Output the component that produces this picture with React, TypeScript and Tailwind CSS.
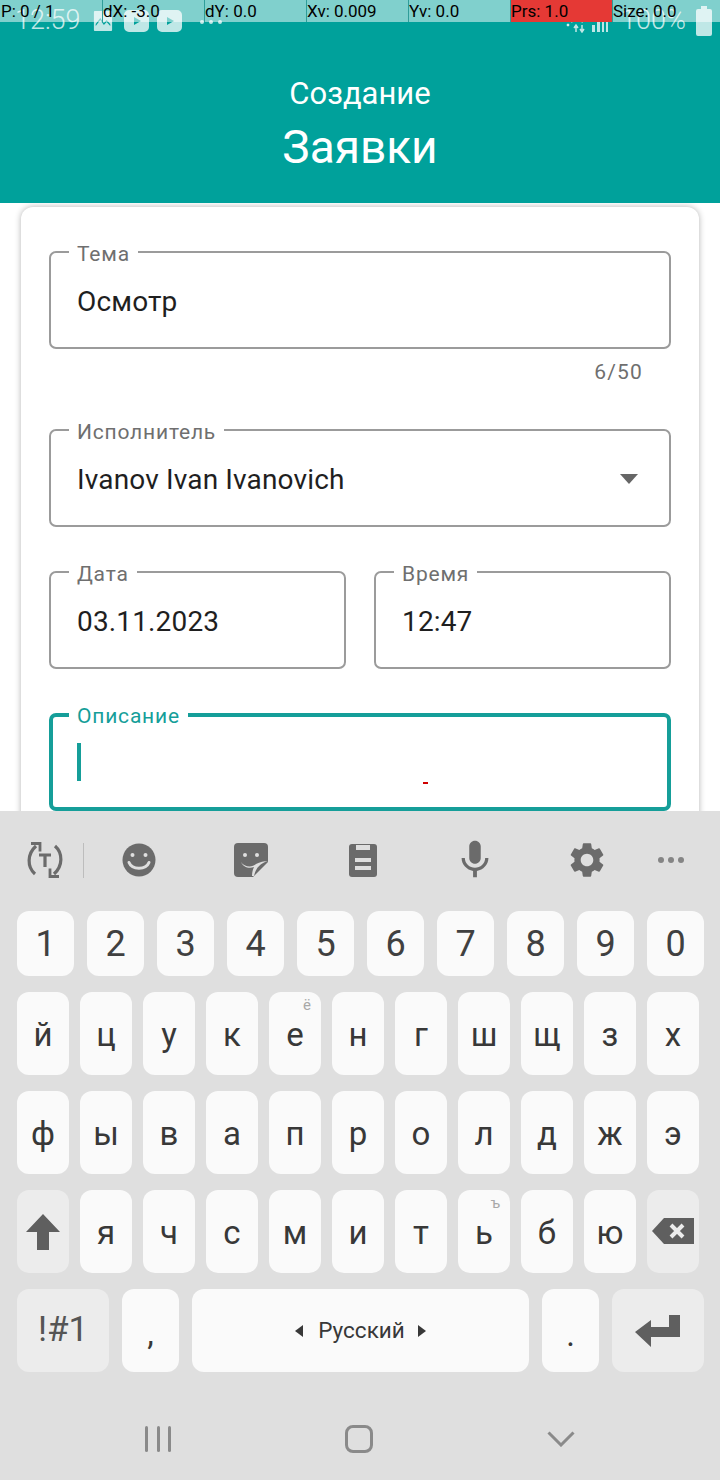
import { ReactNode } from 'react';
import { MdMic, MdSettings } from 'react-icons/md';

const pointerCells = ['P: 0 / 1', 'dX: -3.0', 'dY: 0.0', 'Xv: 0.009', 'Yv: 0.0', 'Prs: 1.0', 'Size: 0.0'];
const digits = ['1', '2', '3', '4', '5', '6', '7', '8', '9', '0'];
const row1 = ['й', 'ц', 'у', 'к', 'е', 'н', 'г', 'ш', 'щ', 'з', 'х'];
const row2 = ['ф', 'ы', 'в', 'а', 'п', 'р', 'о', 'л', 'д', 'ж', 'э'];
const row3 = ['я', 'ч', 'с', 'м', 'и', 'т', 'ь', 'б', 'ю'];

function Field({ label, width, children, focused }: { label: string; width?: string; children?: ReactNode; focused?: boolean }) {
  return (
    <div className={`relative h-[98px] rounded-[7px] flex items-center ${width ?? 'w-full'} ${focused ? 'border-4 border-[#159e99] pl-[24px]' : 'border-2 border-[#9b9b9b] pl-[26px]'}`}>
      <span className={`absolute bg-white px-[8px] text-[21px] leading-[22px] tracking-[0.8px] ${focused ? '-top-[12px] left-[16px] text-[#159e99]' : '-top-[10px] left-[18px] text-[#6f6f6f]'}`}>{label}</span>
      {children}
    </div>
  );
}

function Value({ children }: { children: ReactNode }) {
  return <span className="pt-[4px] text-[28px] leading-[32px] tracking-[0.15px] text-[#1f1f1f]">{children}</span>;
}

function LetterKey({ ch, sup }: { ch: string; sup?: string }) {
  return (
    <div className="relative w-[52px] h-[83px] rounded-[12px] bg-[#fafafa] flex items-center justify-center pt-[2px] text-[33px] text-[#383838]">
      {ch}
      {sup && <span className="absolute top-[3px] right-[10px] text-[15px] leading-[20px] text-[#a8a8a8]">{sup}</span>}
    </div>
  );
}

function StatusBar() {
  return (
    <div className="h-[40px] flex items-center pl-[15px] pr-[8px] text-white/75">
      <span className="text-[27px] leading-[40px] font-light">12:59</span>
      <svg width="20" height="22" viewBox="0 0 22 22" className="ml-[12px] mt-[2px]" fill="currentColor" preserveAspectRatio="none">
        <path d="M2 1h18a1 1 0 0 1 1 1v18a1 1 0 0 1-1 1H2a1 1 0 0 1-1-1V2a1 1 0 0 1 1-1Zm1 15 5-6 4 5 3-3 4 4v-2l-4-4-3 3-4-5-5 6Z" fillRule="evenodd" />
      </svg>
      <svg width="25" height="24" viewBox="0 0 25 24" className="ml-[11px] mt-[2px]" fill="currentColor">
        <path d="M5 1h15a5 5 0 0 1 5 5v12a5 5 0 0 1-5 5H5a5 5 0 0 1-5-5V6a5 5 0 0 1 5-5Zm5 7v8l7-4Z" fillRule="evenodd" />
      </svg>
      <svg width="25" height="24" viewBox="0 0 25 24" className="ml-[8px] mt-[2px]" fill="currentColor">
        <path d="M5 1h15a5 5 0 0 1 5 5v12a5 5 0 0 1-5 5H5a5 5 0 0 1-5-5V6a5 5 0 0 1 5-5Zm5 7v8l7-4Z" fillRule="evenodd" />
      </svg>
      <div className="ml-[18px] flex gap-[5px] mt-[3px]">
        <span className="w-[4px] h-[4px] rounded-full bg-current" />
        <span className="w-[4px] h-[4px] rounded-full bg-current" />
        <span className="w-[4px] h-[4px] rounded-full bg-current" />
      </div>
      <div className="flex-1" />
      <svg width="24" height="24" viewBox="0 0 24 24" className="mt-[2px]" fill="none" stroke="currentColor">
        <path d="M2 9c5-6 14-6 20 0" strokeWidth="2" />
        <path d="M6 13c3-3 9-3 12 0" strokeWidth="2" />
        <circle cx="3" cy="16" r="1" fill="currentColor" />
        <path d="M11 23v-7m-2 3 2-3 2 3M17 16v7m-2-3 2 3 2-3" strokeWidth="1.5" />
      </svg>
      <svg width="18" height="22" viewBox="0 0 18 22" className="ml-[2px] mt-[2px]" fill="currentColor">
        <rect x="1" y="15" width="3" height="7" />
        <rect x="6" y="11" width="3" height="11" />
        <rect x="11" y="6" width="2" height="16" />
        <rect x="15" y="1" width="2" height="21" />
      </svg>
      <span className="ml-[12px] text-[27px] leading-[40px] font-light">100%</span>
      <svg width="16" height="30" viewBox="0 0 16 30" className="ml-[10px] mt-[2px]" fill="currentColor">
        <path d="M5 0h6v3h3a2 2 0 0 1 2 2v23a2 2 0 0 1-2 2H2a2 2 0 0 1-2-2V5a2 2 0 0 1 2-2h3Z" />
      </svg>
    </div>
  );
}

function Toolbar() {
  return (
    <div className="h-[100px] flex items-center pb-[2px] text-[#6b6b6b]">
      <div className="w-[83px] pl-[7px] flex justify-center">
        <svg width="38" height="38" viewBox="0 0 38 38" fill="none" stroke="currentColor" strokeWidth="3.2">
          <path d="M9 33C1 26 1 13 10 5" />
          <path d="M5 2.500h9v8" strokeWidth="2.800" />
          <path d="M29 5c8 7 8 20-1 28" />
          <path d="M33 35.500h-9v-8" strokeWidth="2.800" />
          <path d="M13 14h12M19 14v12" />
        </svg>
      </div>
      <div className="w-px h-[35px] bg-[#bdbdbd] -mr-px" />
      <div className="w-[112px] flex justify-center">
        <svg width="34" height="34" viewBox="0 0 34 34" fill="currentColor">
          <circle cx="17" cy="17" r="16.500" />
          <circle cx="10.500" cy="12" r="2" fill="#dfdfdf" />
          <circle cx="23.500" cy="12" r="2" fill="#dfdfdf" />
          <path d="M7 19.500c3 7.500 17 7.500 20 0" fill="none" stroke="#dfdfdf" strokeWidth="3" strokeLinecap="round" />
        </svg>
      </div>
      <div className="w-[112px] flex justify-center">
        <svg width="34" height="34" viewBox="0 0 34 34" fill="currentColor">
          <path d="M4 0h26a4 4 0 0 1 4 4v15L19 34H4a4 4 0 0 1-4-4V4a4 4 0 0 1 4-4Z" />
          <circle cx="11" cy="12" r="2" fill="#dfdfdf" />
          <circle cx="23" cy="12" r="2" fill="#dfdfdf" />
          <path d="M7 19c3 5 11 6 15 2 4-2 8-3 12-3-7 2-12 6-14 15h-2c0-4 1-7 2-9-5 2-11 0-13-5Z" fill="#dfdfdf" />
        </svg>
      </div>
      <div className="w-[112px] flex justify-center">
        <svg width="28" height="33" viewBox="0 0 28 33" fill="currentColor">
          <path d="M3 0h22a3 3 0 0 1 3 3v27a3 3 0 0 1-3 3H3a3 3 0 0 1-3-3V3a3 3 0 0 1 3-3Z" />
          <rect x="7" y="1" width="14" height="5" fill="#dfdfdf" />
          <rect x="6" y="14" width="16" height="4" fill="#dfdfdf" />
          <rect x="6" y="22" width="16" height="4" fill="#dfdfdf" />
        </svg>
      </div>
      <div className="w-[112px] flex justify-center">
        <MdMic size={46} />
      </div>
      <div className="w-[112px] flex justify-center">
        <MdSettings size={42} />
      </div>
      <div className="w-[56px] flex justify-center gap-[4px]">
        <span className="w-[6px] h-[6px] rounded-full bg-[#858585]" />
        <span className="w-[6px] h-[6px] rounded-full bg-[#858585]" />
        <span className="w-[6px] h-[6px] rounded-full bg-[#858585]" />
      </div>
    </div>
  );
}

function Keyboard() {
  return (
    <div className="h-[669px] shrink-0 bg-[#dfdfdf] relative z-10">
      <Toolbar />
      <div className="pl-[17px] flex flex-col gap-[16px]">
        <div className="flex gap-[13px]">
          {digits.map((d) => (
            <div key={d} className="w-[57px] h-[65px] rounded-[12px] bg-[#fafafa] flex items-center justify-center text-[36px] text-[#404040]">
              {d}
            </div>
          ))}
        </div>
        <div className="flex gap-[11px]">
          {row1.map((c) => (
            <LetterKey key={c} ch={c} sup={c === 'е' ? 'ё' : undefined} />
          ))}
        </div>
        <div className="flex gap-[11px]">
          {row2.map((c) => (
            <LetterKey key={c} ch={c} />
          ))}
        </div>
        <div className="flex gap-[11px]">
          <div className="w-[52px] h-[83px] rounded-[12px] bg-[#ececec] flex items-center justify-center">
            <svg width="36" height="36" viewBox="0 0 36 36" fill="#5f5f5f">
              <path d="M18 0 35 18H24v18H12V18H1Z" />
            </svg>
          </div>
          {row3.map((c) => (
            <LetterKey key={c} ch={c} sup={c === 'ь' ? 'ъ' : undefined} />
          ))}
          <div className="w-[52px] h-[83px] rounded-[12px] bg-[#ececec] flex items-start justify-center pt-[28px]">
            <svg width="42" height="26" viewBox="0 0 42 26" fill="#5f5f5f">
              <path d="M12 0h30v26H12L0 13Z" />
              <path d="M19 7l12 12M31 7 19 19" stroke="#ececec" strokeWidth="4" />
            </svg>
          </div>
        </div>
        <div className="flex gap-[13px]">
          <div className="w-[92px] h-[83px] rounded-[12px] bg-[#ececec] flex items-center justify-center text-[35px] text-[#555555]">!#1</div>
          <div className="w-[57px] h-[83px] rounded-[12px] bg-[#fafafa] flex items-center justify-center pt-[6px] text-[33px] text-[#383838]">,</div>
          <div className="w-[337px] h-[83px] rounded-[12px] bg-[#fafafa] flex items-center justify-center text-[22.500px] text-[#383838]">
            <span className="w-0 h-0 border-y-[6px] border-y-transparent border-r-[8px] border-r-[#383838] mr-[15px]" />
            Русский
            <span className="w-0 h-0 border-y-[6px] border-y-transparent border-l-[8px] border-l-[#383838] ml-[13px]" />
          </div>
          <div className="w-[57px] h-[83px] rounded-[12px] bg-[#fafafa] flex items-center justify-center pt-[8px] text-[33px] text-[#383838]">.</div>
          <div className="w-[92px] h-[83px] rounded-[12px] bg-[#ececec] flex items-center justify-center">
            <svg width="46" height="32" viewBox="0 0 46 32" fill="#5f5f5f">
              <path d="M34 0h11v22H16v10L0 17 16 5v7h18Z" />
            </svg>
          </div>
        </div>
      </div>
      <div className="h-[108px] pl-[145px] flex items-center pt-[26px] text-[#8a8a8a]">
        <div className="w-[26px] flex justify-between">
          <span className="w-[3px] h-[26px] rounded-full bg-current" />
          <span className="w-[3px] h-[26px] rounded-full bg-current" />
          <span className="w-[3px] h-[26px] rounded-full bg-current" />
        </div>
        <div className="ml-[174px] w-[28px] h-[28px] rounded-[8px] border-[3px] border-current" />
        <svg width="28" height="16" viewBox="0 0 28 16" className="ml-[174px]" fill="none" stroke="currentColor" strokeWidth="3">
          <path d="M1.500 1.500 14 14 26.500 1.500" />
        </svg>
      </div>
    </div>
  );
}

export default function App() {
  return (
    <div className="relative w-[720px] h-[1480px] overflow-hidden flex flex-col bg-white font-[Roboto,sans-serif]">
      <header className="h-[203px] shrink-0 bg-[#00a19b] text-white text-center">
        <StatusBar />
        <div className="pt-[32px] text-[31px] leading-[44px]">Создание</div>
        <div className="pt-[1px] text-[46px] leading-[60px]">Заявки</div>
      </header>

      {/* pointer location overlay */}
      <div className="absolute top-0 left-0 right-0 h-[22px] z-20 flex bg-white/50 text-black text-[17px] leading-[23px]">
        {pointerCells.map((c, i) => (
          <div key={c} className={`overflow-hidden whitespace-nowrap ${i === 6 ? 'flex-1' : 'w-[102px]'} ${i > 0 ? 'border-l border-[#2f9d99]' : 'pl-[1px]'} ${c.startsWith('Prs') ? 'bg-[#e53935]' : ''}`}>
            {c}
          </div>
        ))}
      </div>

      <main className="flex-1 overflow-hidden">
        <div className="relative mt-[4px] mx-[21px] h-[700px] rounded-[12px] bg-white shadow-[0_0_6px_rgba(0,0,0,0.3)] px-[28px] pt-[44px]">
          <Field label="Тема">
            <Value>Осмотр</Value>
          </Field>
          <div className="h-[80px] pt-[11px] pr-[28px] text-right text-[21px] leading-[24px] tracking-[1.2px] text-[#6f6f6f]">6/50</div>
          <Field label="Исполнитель">
            <Value>Ivanov Ivan Ivanovich</Value>
            <span className="absolute right-[31px] top-[43px] w-0 h-0 border-x-[9px] border-x-transparent border-t-[10px] border-t-[#666666]" />
          </Field>
          <div className="mt-[44px] flex gap-[28px]">
            <Field label="Дата" width="w-[297px]">
              <Value>03.11.2023</Value>
            </Field>
            <Field label="Время" width="w-[297px]">
              <Value>12:47</Value>
            </Field>
          </div>
          <div className="mt-[44px]">
            <Field label="Описание" focused>
              <span className="w-[4px] h-[38px] bg-[#159e99]" />
              <span className="absolute left-[370px] top-[65px] w-[5px] h-[2px] bg-[#d00000]" />
            </Field>
          </div>
        </div>
      </main>

      <Keyboard />
    </div>
  );
}
